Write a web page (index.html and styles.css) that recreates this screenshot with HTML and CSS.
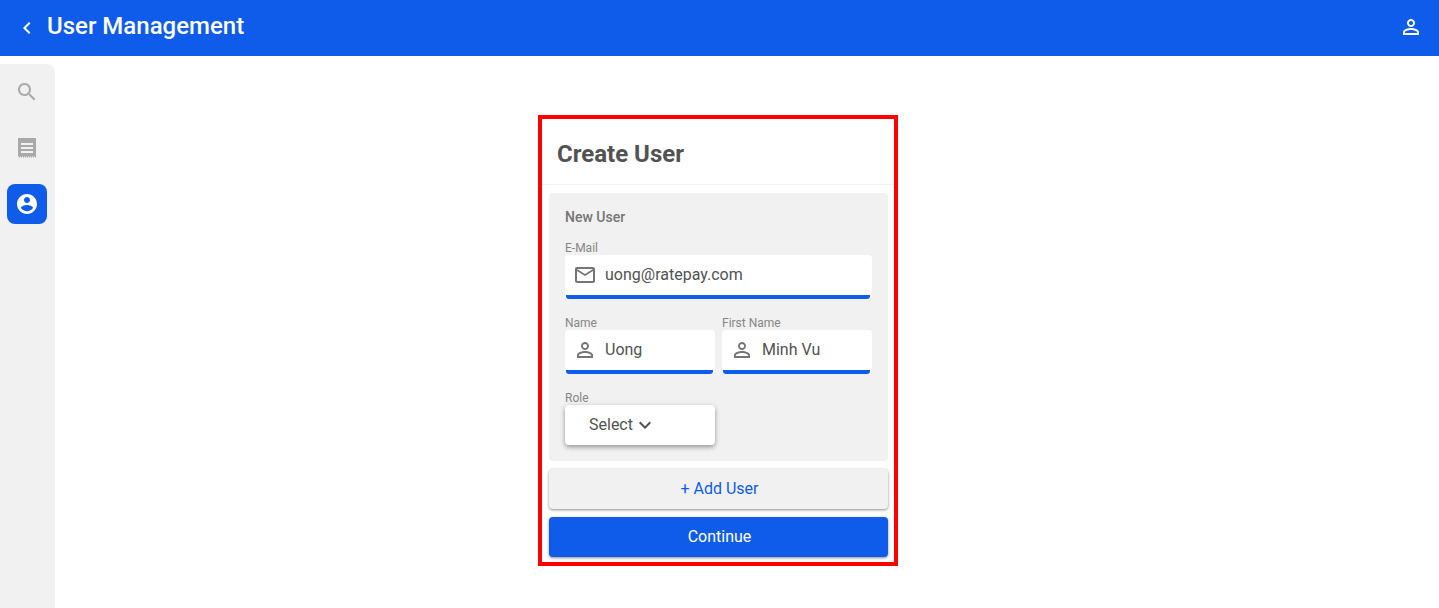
FILE: index.html
```html
<!DOCTYPE html>
<html lang="en">
<head>
<meta charset="utf-8">
<title>User Management</title>
<link rel="stylesheet" href="styles.css">
</head>
<body>
<header class="topbar">
  <div class="topbar-left">
    <svg class="back-icon" viewBox="0 0 24 24"><path d="M15.41 7.41L14 6l-6 6 6 6 1.41-1.41L10.83 12z"/></svg>
    <h1 class="page-title">User Management</h1>
  </div>
  <svg class="account-icon" viewBox="0 0 24 24"><path d="M12 5.9c1.16 0 2.1.94 2.1 2.1s-.94 2.1-2.1 2.1S9.9 9.16 9.9 8s.94-2.1 2.1-2.1m0 9c2.97 0 6.1 1.46 6.1 2.1v1.1H5.9V17c0-.64 3.13-2.1 6.1-2.1M12 4C9.79 4 8 5.79 8 8s1.79 4 4 4 4-1.79 4-4-1.79-4-4-4zm0 9c-2.67 0-8 1.34-8 4v3h16v-3c0-2.66-5.33-4-8-4z"/></svg>
</header>
<div class="shell">
  <nav class="sidebar">
    <div class="nav-item">
      <svg class="nav-icon" viewBox="0 0 24 24"><path d="M15.5 14h-.79l-.28-.27C15.41 12.59 16 11.11 16 9.5 16 5.91 13.09 3 9.5 3S3 5.91 3 9.5 5.91 16 9.5 16c1.61 0 3.09-.59 4.23-1.57l.27.28v.79l5 4.99L20.49 19l-4.99-5zm-6 0C7.01 14 5 11.99 5 9.5S7.01 5 9.5 5 14 7.01 14 9.5 11.99 14 9.5 14z"/></svg>
    </div>
    <div class="nav-item">
      <svg class="nav-icon" viewBox="0 0 24 24"><path fill-rule="evenodd" d="M3 2h18v19.5h-1v-1h-1v1h-1v-1h-1v1h-1v-1h-1v1h-1v-1h-1v1h-1v-1h-1v1h-1v-1H9v1H8v-1H7v1H6v-1H5v1H4v-1H3zM6 7v2h12V7zm0 4v2h12v-2zm0 4v2h12v-2z"/></svg>
    </div>
    <div class="nav-item nav-item-active">
      <svg class="nav-icon" viewBox="0 0 24 24"><path d="M12 2C6.48 2 2 6.48 2 12s4.48 10 10 10 10-4.48 10-10S17.52 2 12 2zm0 3c1.66 0 3 1.34 3 3s-1.34 3-3 3-3-1.34-3-3 1.34-3 3-3zm0 14.2c-2.5 0-4.71-1.28-6-3.22.03-1.99 4-3.08 6-3.08 1.99 0 5.97 1.09 6 3.08-1.29 1.94-3.5 3.22-6 3.22z"/></svg>
    </div>
  </nav>
  <main class="content">
    <section class="card">
      <h2 class="card-title">Create User</h2>
      <div class="card-body">
        <div class="panel">
          <h3 class="panel-title">New User</h3>
          <div class="field">
            <label class="field-label">E-Mail</label>
            <div class="input">
              <svg class="input-icon" viewBox="0 0 24 24"><path d="M20 4H4c-1.1 0-1.99.9-1.99 2L2 18c0 1.1.9 2 2 2h16c1.1 0 2-.9 2-2V6c0-1.1-.9-2-2-2zm0 14H4V8l8 5 8-5v10zm-8-7L4 6h16l-8 5z"/></svg>
              <span class="input-value">uong@ratepay.com</span>
            </div>
          </div>
          <div class="field-row">
            <div class="field">
              <label class="field-label">Name</label>
              <div class="input">
                <svg class="input-icon" viewBox="0 0 24 24"><path d="M12 5.9c1.16 0 2.1.94 2.1 2.1s-.94 2.1-2.1 2.1S9.9 9.16 9.9 8s.94-2.1 2.1-2.1m0 9c2.97 0 6.1 1.46 6.1 2.1v1.1H5.9V17c0-.64 3.13-2.1 6.1-2.1M12 4C9.79 4 8 5.79 8 8s1.79 4 4 4 4-1.79 4-4-1.79-4-4-4zm0 9c-2.67 0-8 1.34-8 4v3h16v-3c0-2.66-5.33-4-8-4z"/></svg>
                <span class="input-value">Uong</span>
              </div>
            </div>
            <div class="field">
              <label class="field-label">First Name</label>
              <div class="input">
                <svg class="input-icon" viewBox="0 0 24 24"><path d="M12 5.9c1.16 0 2.1.94 2.1 2.1s-.94 2.1-2.1 2.1S9.9 9.16 9.9 8s.94-2.1 2.1-2.1m0 9c2.97 0 6.1 1.46 6.1 2.1v1.1H5.9V17c0-.64 3.13-2.1 6.1-2.1M12 4C9.79 4 8 5.79 8 8s1.79 4 4 4 4-1.79 4-4-1.79-4-4-4zm0 9c-2.67 0-8 1.34-8 4v3h16v-3c0-2.66-5.33-4-8-4z"/></svg>
                <span class="input-value">Minh Vu</span>
              </div>
            </div>
          </div>
          <div class="field field-role">
            <label class="field-label">Role</label>
            <div class="select">
              <span>Select</span>
              <svg class="select-icon" viewBox="0 0 24 24"><path d="M16.59 8.59L12 13.17 7.41 8.59 6 10l6 6 6-6z"/></svg>
            </div>
          </div>
        </div>
        <button class="btn btn-secondary" type="button">+ Add User</button>
        <button class="btn btn-primary" type="button">Continue</button>
      </div>
    </section>
  </main>
</div>
</body>
</html>
```

FILE: styles.css
```css
* { box-sizing: border-box; }
html, body { margin: 0; height: 100%; }
body {
  font-family: Roboto, "Liberation Sans", sans-serif;
  background: #fff;
  color: #505050;
  overflow: hidden;
}
.topbar {
  height: 56px;
  background: #0f5ceb;
  color: #fff;
  display: flex;
  align-items: center;
  justify-content: space-between;
  padding: 0 16px;
}
.topbar-left { display: flex; align-items: center; gap: 8px; margin-left: -1px; }
.back-icon { width: 24px; height: 24px; fill: #fff; }
.page-title { margin: 0 0 4px; font-size: 24px; font-weight: 500; line-height: 28px; }
.account-icon { width: 24px; height: 24px; fill: #fff; margin-bottom: 2px; }
.shell { display: flex; height: 552px; }
.sidebar {
  width: 55px;
  margin-top: 8px;
  background: #f1f1f1;
  border-top-right-radius: 8px;
  display: flex;
  flex-direction: column;
  align-items: center;
  gap: 16px;
  padding-top: 8px;
  padding-right: 1px;
}
.nav-item {
  width: 40px;
  height: 40px;
  border-radius: 8px;
  display: flex;
  align-items: center;
  justify-content: center;
}
.nav-icon { width: 24px; height: 24px; fill: #a9a9a9; }
.nav-item-active { background: #0f5ceb; }
.nav-item-active .nav-icon { fill: #fff; }
.content { flex: 1; padding: 59px 0 0 483px; }
.card {
  width: 360px;
  height: 451px;
  border: 4px solid #ff0000;
  background: #fff;
}
.card-title {
  margin: 0;
  height: 66px;
  padding: 4px 15px 0;
  display: flex;
  align-items: center;
  font-size: 24px;
  font-weight: 700;
  color: #525252;
  border-bottom: 1px solid #efefef;
}
.card-body {
  padding: 8px 6px 0 7px;
  display: flex;
  flex-direction: column;
  gap: 8px;
}
.panel {
  height: 268px;
  background: #f1f1f1;
  border-radius: 4px;
  padding: 16px;
}
.panel-title {
  margin: 0 0 16px;
  font-size: 14px;
  font-weight: 500;
  line-height: 16px;
  color: #757575;
}
.field { display: flex; flex-direction: column; }
.field-label {
  font-size: 12px;
  line-height: 14px;
  color: #868686;
}
.input {
  height: 44px;
  background: #fff;
  border-radius: 4px;
  display: flex;
  align-items: center;
  gap: 8px;
  padding: 0 8px 6px;
  position: relative;
}
.input::after {
  content: "";
  position: absolute;
  left: 1px;
  right: 2px;
  bottom: 0;
  height: 4px;
  background: #0f5ceb;
  border-radius: 0 0 3px 3px;
}
.input-icon { width: 24px; height: 24px; fill: #757575; flex: none; margin-top: 2px; }
.input-value { font-size: 16px; color: #525252; }
.field-row {
  display: grid;
  grid-template-columns: 150px 150px;
  gap: 7px;
  margin-top: 17px;
}
.field-role { margin-top: 17px; width: 150px; }
.select {
  height: 40px;
  background: #fff;
  border-radius: 4px;
  display: flex;
  align-items: center;
  gap: 0;
  padding: 0 0 2px 24px;
  font-size: 16px;
  color: #525252;
  box-shadow: 0 2px 5px rgba(0, 0, 0, 0.4);
}
.select-icon { width: 24px; height: 24px; fill: #525252; margin-top: 2px; }
.btn {
  height: 40px;
  border: 0;
  border-radius: 4px;
  padding: 0 0 2px 2px;
  font-family: inherit;
  font-size: 16px;
  box-shadow: 0 1px 3px rgba(0, 0, 0, 0.45);
}
.btn-secondary { background: #f1f1f1; color: #0f5ceb; }
.btn-primary { background: #0f5ceb; color: #fff; }
```
